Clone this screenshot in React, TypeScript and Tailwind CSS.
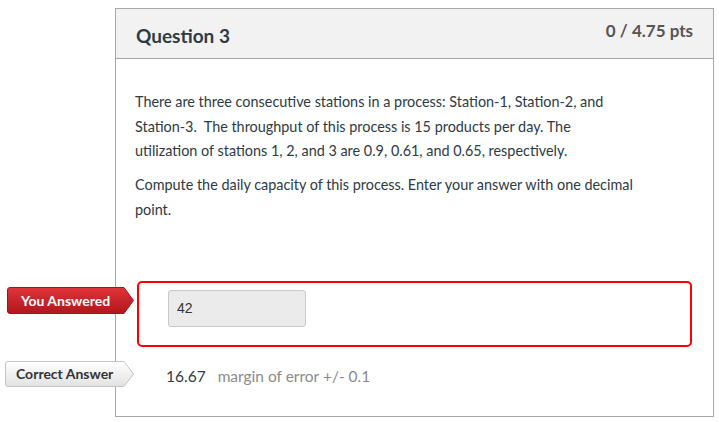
import React from 'react';

const YouAnsweredTag: React.FC = () => (
  <div className="absolute left-[-109px] top-[278px] w-[127px] h-[27px]">
    <svg width="127" height="27" viewBox="0 0 127 27" className="absolute inset-0">
      <defs>
        <linearGradient id="redTag" x1="0" y1="0" x2="0" y2="1">
          <stop offset="0" stopColor="#e0343a" />
          <stop offset="1" stopColor="#b0161c" />
        </linearGradient>
      </defs>
      <path d="M3 0.5 H117 L126.5 13.5 L117 26.5 H3 A2.5 2.5 0 0 1 0.5 24 V3 A2.5 2.5 0 0 1 3 0.5 Z" fill="url(#redTag)" stroke="#a3151a" strokeWidth="1" />
    </svg>
    <span className="relative block pl-[14px] leading-[27px] text-[14px] font-bold text-white">You Answered</span>
  </div>
);

const CorrectAnswerTag: React.FC = () => (
  <div className="absolute left-[-111px] top-[352px] w-[129px] h-[26px]">
    <svg width="129" height="26" viewBox="0 0 129 26" className="absolute inset-0">
      <defs>
        <linearGradient id="grayTag" x1="0" y1="0" x2="0" y2="1">
          <stop offset="0" stopColor="#ffffff" />
          <stop offset="1" stopColor="#e2e2e2" />
        </linearGradient>
      </defs>
      <path d="M3 0.5 H119 L128.5 13 L119 25.5 H3 A2.5 2.5 0 0 1 0.5 23 V3 A2.5 2.5 0 0 1 3 0.5 Z" fill="url(#grayTag)" stroke="#c4c4c4" strokeWidth="1" />
    </svg>
    <span className="relative block pl-[11px] leading-[26px] text-[14px] font-bold text-[#333]">Correct Answer</span>
  </div>
);

export default function App() {
  return (
    <div className="w-[719px] h-[422px] bg-white pt-[8px] font-['Lato','Liberation_Sans',sans-serif]">
      <div className="relative ml-[115px] w-[599px] h-[409px] border border-[#a8a8a8]">
        {/* header */}
        <div className="flex justify-between h-[50px] px-[20px] bg-[#f2f2f2] border-b border-[#a8a8a8]">
          <h2 className="pt-[16px] text-[19px] leading-[22px] font-bold text-[#2d3b45]">Question 3</h2>
          <div className="pt-[12px] text-[17px] leading-[20px] font-bold text-[#555]">0 / 4.75 pts</div>
        </div>

        {/* question text */}
        <div className="pt-[31px] pl-[19px] w-[518.5px] text-[14.4px] leading-[24.5px] text-[#2d3b45]">
          <p className="mb-[9.5px]">
            There are three consecutive stations in a process: Station-1, Station-2, and Station-3.&nbsp; The throughput of this process is 15 products per day. The utilization of stations 1, 2, and 3 are 0.9, 0.61, and 0.65, respectively.
          </p>
          <p>Compute the daily capacity of this process. Enter your answer with one decimal point.</p>
        </div>

        {/* your answer */}
        <div className="mt-[59px] ml-[21px] w-[555px] h-[66px] border-2 border-[#ff0000] rounded-[5px] pt-[7px] pl-[29px]">
          <div className="w-[138px] h-[37px] bg-[#ebebeb] border border-[#c8c8c8] rounded-[3px] px-[8px] leading-[35px] text-[14px] text-[#333] font-['Liberation_Sans',sans-serif]">
            42
          </div>
        </div>

        {/* correct answer */}
        <div className="flex gap-[12px] mt-[17px] pl-[50px] text-[15.5px] leading-[24px]">
          <span className="text-[#2d3b45]">16.67</span>
          <span className="text-[#8b8b8b]">margin of error +/- 0.1</span>
        </div>

        <YouAnsweredTag />
        <CorrectAnswerTag />
      </div>
    </div>
  );
}
